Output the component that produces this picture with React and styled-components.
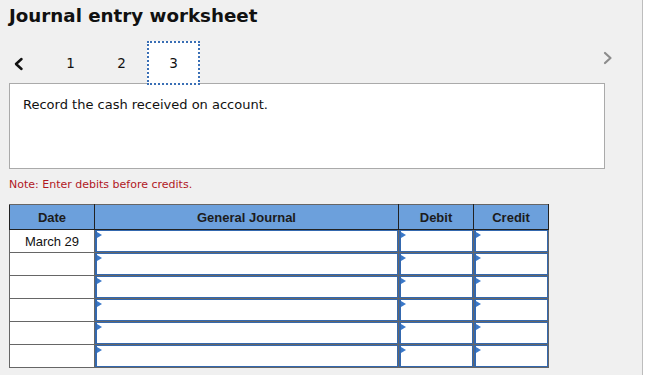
import React from 'react';
import styled, { createGlobalStyle } from 'styled-components';

const GlobalStyle = createGlobalStyle`
  html, body {
    margin: 0;
    padding: 0;
    background: #ffffff;
  }
`;

const Page = styled.div`
  width: 643px;
  min-height: 375px;
  box-sizing: border-box;
  background: #f0f0f0;
  border-right: 1px solid #bdbdbd;
  padding: 5px 0 0 9px;
  font-family: 'DejaVu Sans', Verdana, sans-serif;
`;

const Title = styled.h1`
  margin: 0;
  font-size: 18.25px;
  line-height: 22px;
  font-weight: bold;
  color: #111;
`;

const Nav = styled.div`
  display: flex;
  align-items: center;
  width: 603px;
  height: 44px;
  margin-top: 14px;
`;

const Arrow = styled.span`
  display: flex;
  align-items: center;
  color: ${p => (p.disabled ? '#8c8c8c' : '#111')};
  width: ${p => (p.left ? '33px' : 'auto')};
  padding-left: ${p => (p.left ? '3px' : '0')};
  margin-left: ${p => (p.left ? '0' : 'auto')};
  margin-right: ${p => (p.left ? '0' : '-2px')};
  margin-top: ${p => (p.left ? '2px' : '-11px')};
`;

const Tab = styled.div`
  position: relative;
  z-index: 1;
  height: 44px;
  box-sizing: border-box;
  display: flex;
  align-items: center;
  justify-content: center;
  font-size: 13.5px;
  color: #111;
  background: ${p => (p.active ? '#ffffff' : 'transparent')};
  border: 2px ${p => (p.active ? 'dotted #3a6fb5' : 'solid transparent')};
  width: ${p => (p.active ? '53px' : '51px')};
`;

const Prompt = styled.div`
  margin-top: -2px;
  width: 596px;
  height: 86px;
  box-sizing: border-box;
  background: #fff;
  border: 1px solid #aaaaaa;
  padding: 13px 0 0 13px;
  font-size: 13px;
  color: #111;
`;

const Note = styled.p`
  margin: 9px 0 0;
  font-size: 11px;
  color: #b0171f;
`;

const Table = styled.table`
  margin-top: 13px;
  border-collapse: collapse;
  border: 1px solid #666;
  font-family: 'Liberation Sans', Arial, sans-serif;
  font-size: 13px;
  table-layout: fixed;
`;

const Th = styled.th`
  width: ${p => p.w}px;
  height: 24px;
  padding: 0;
  background: #6ca0dc;
  color: #1c1c1c;
  font-weight: bold;
  border: 1px solid #222;
  border-top-color: #666;
`;

const DateCell = styled.td`
  height: 22px;
  padding: 0;
  background: #fff;
  border: 1px solid #666;
  text-align: center;
  color: #111;
`;

const InputCell = styled.td`
  height: 22px;
  padding: 0;
  border: 1px solid #666;
  background: #fff;
`;

const Field = styled.div`
  position: relative;
  height: 22px;
  box-sizing: border-box;
  background: #fff;
  border: 1px solid #3468ae;
  border-left-width: 2px;

  &::before {
    content: '';
    position: absolute;
    left: 0;
    top: 1px;
    border-left: 5px solid #3a78c8;
    border-top: 3px solid transparent;
    border-bottom: 3px solid transparent;
  }
`;

const Chevron = ({ dir, size = 14 }) => (
  <svg width={size} height={size} viewBox="0 0 14 14" fill="none">
    <path
      d={dir === 'left' ? 'M9.5 2 L4 7 L9.5 12' : 'M5 2 L10.5 7 L5 12'}
      stroke="currentColor"
      strokeWidth={dir === 'left' ? 2.5 : 2.2}
      strokeLinecap="round"
      strokeLinejoin="round"
    />
  </svg>
);

const rows = ['March 29', '', '', '', '', ''];

export default function App() {
  return (
    <>
      <GlobalStyle />
      <Page>
        <Title>Journal entry worksheet</Title>
        <Nav>
          <Arrow left>
            <Chevron dir="left" />
          </Arrow>
          <Tab>1</Tab>
          <Tab>2</Tab>
          <Tab active>3</Tab>
          <Arrow disabled>
            <Chevron dir="right" />
          </Arrow>
        </Nav>
        <Prompt>Record the cash received on account.</Prompt>
        <Note>Note: Enter debits before credits.</Note>
        <Table>
          <thead>
            <tr>
              <Th w={84}>Date</Th>
              <Th w={303}>General Journal</Th>
              <Th w={74}>Debit</Th>
              <Th w={74}>Credit</Th>
            </tr>
          </thead>
          <tbody>
            {rows.map((d, i) => (
              <tr key={i}>
                <DateCell>{d}</DateCell>
                <InputCell><Field /></InputCell>
                <InputCell><Field /></InputCell>
                <InputCell><Field /></InputCell>
              </tr>
            ))}
          </tbody>
        </Table>
      </Page>
    </>
  );
}
